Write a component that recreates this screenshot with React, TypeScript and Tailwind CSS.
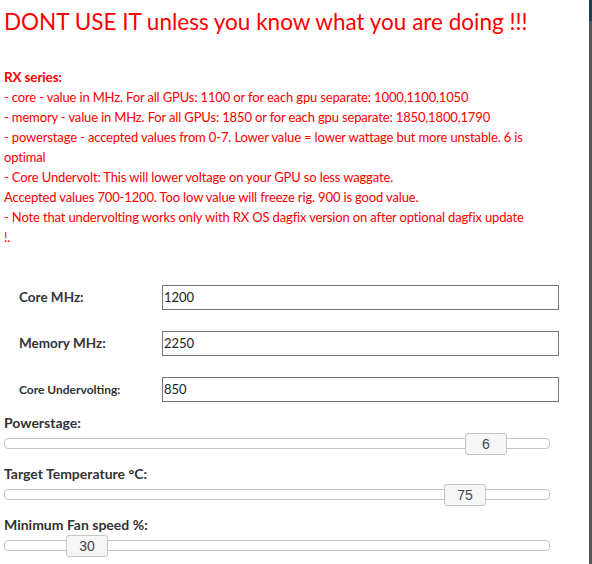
import React from 'react';

const notes = [
  '- core - value in MHz. For all GPUs: 1100 or for each gpu separate: 1000,1100,1050',
  '- memory - value in MHz. For all GPUs: 1850 or for each gpu separate: 1850,1800,1790',
  '- powerstage - accepted values from 0-7. Lower value = lower wattage but more unstable. 6 is',
  'optimal',
  '- Core Undervolt: This will lower voltage on your GPU so less waggate.',
  'Accepted values 700-1200. Too low value will freeze rig. 900 is good value.',
  '- Note that undervolting works only with RX OS dagfix version on after optional dagfix update',
  '!.',
];

const fields = [
  { label: 'Core MHz:', value: '1200', small: false },
  { label: 'Memory MHz:', value: '2250', small: false },
  { label: 'Core Undervolting:', value: '850', small: true },
];

const sliders = [
  { label: 'Powerstage:', value: '6', left: 460 },
  { label: 'Target Temperature °C:', value: '75', left: 439 },
  { label: 'Minimum Fan speed %:', value: '30', left: 61 },
];

function Slider({ label, value, left }: { label: string; value: string; left: number }) {
  return (
    <div className="mb-[15px]">
      <div className="text-[14px] leading-[20px] font-bold text-[#333]">{label}</div>
      <div className="relative mt-[5px] h-[11px] w-[546px] rounded-[4px] border border-[#c5c5c5] bg-white">
        <div
          className="absolute top-[-6px] flex h-[22px] w-[42px] items-center justify-center rounded-[3px] border border-[#c5c5c5] bg-[#f6f6f6] text-[14px] text-[#454545] font-['Liberation_Sans',Arial,sans-serif]"
          style={{ left }}
        >
          {value}
        </div>
      </div>
    </div>
  );
}

export default function App() {
  return (
    <div className="flex h-[564px] w-[592px] bg-white font-['Lato','Open_Sans',sans-serif]">
      <div className="flex-1 pl-[4px]">
        <h1 className="mt-[8px] text-[22.5px] leading-[28px] text-[#ff0000]">
          DONT USE IT unless you know what you are doing !!!
        </h1>

        <div className="mt-[31px] text-[13px] leading-[20px] tracking-[-0.15px] text-[#ff0000]">
          <div className="font-bold text-[13.5px]">RX series:</div>
          {notes.map((n, i) => (
            <div key={i} className="whitespace-nowrap">
              {n}
            </div>
          ))}
        </div>

        <div className="mt-[38px] flex flex-col gap-[21px] pl-[15px]">
          {fields.map((f) => (
            <div key={f.label} className="flex items-center">
              <div
                className={`w-[143px] font-bold text-[#333] ${f.small ? 'text-[12px]' : 'text-[13.5px]'}`}
              >
                {f.label}
              </div>
              <div className="flex h-[25px] w-[397px] items-center border border-[#767676] px-[1px] text-[13px] text-[#222]">
                {f.value}
              </div>
            </div>
          ))}
        </div>

        <div className="mt-[11px]">
          {sliders.map((s) => (
            <Slider key={s.label} {...s} />
          ))}
        </div>
      </div>

      <div className="flex w-[3px] flex-col">
        <div className="h-[21px] bg-[#1d3d55]" />
        <div className="flex-1 bg-[#555]" />
      </div>
    </div>
  );
}
